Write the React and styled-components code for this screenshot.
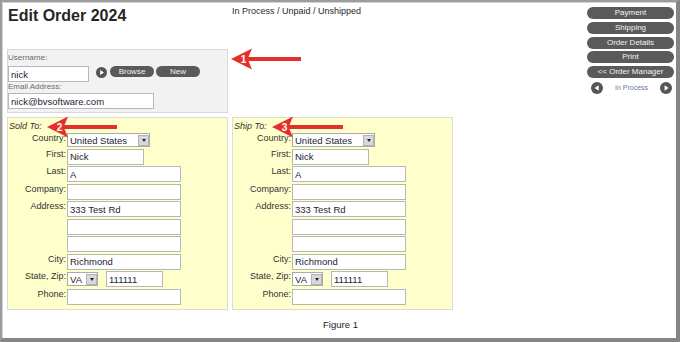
import styled, { createGlobalStyle } from "styled-components";

const GlobalStyle = createGlobalStyle`
  body {
    margin: 0;
    background: #fff;
    font-family: "Liberation Sans", Arial, sans-serif;
  }
`;

const Frame = styled.div`
  position: relative;
  width: 680px;
  height: 342px;
  box-sizing: border-box;
  border-style: solid;
  border-color: #9c9c9c #858585 #858585 #9c9c9c;
  border-width: 2px 4px 4px 2px;
  box-shadow: inset 1px 1px 0 #d4d4d4;
  background: #fff;
  padding: 4px 2px 0 5px;
  display: flex;
  flex-direction: column;
  color: #222;
`;

const Top = styled.div`
  display: flex;
  justify-content: space-between;
  align-items: flex-start;
`;

const Main = styled.div`
  display: grid;
  grid-template-columns: 221px 221px;
  grid-template-rows: 39px auto auto;
  column-gap: 4px;
  row-gap: 4px;
`;

const Title = styled.h1`
  margin: 1px 0 0 1px;
  font-size: 16px;
  line-height: 18px;
  font-weight: bold;
  color: #262626;
`;

const Status = styled.div`
  font-size: 9px;
  line-height: 11px;
  color: #2a2a2a;
`;

const UserBox = styled.div`
  grid-column: 1;
  border: 1px solid #d8d8d8;
  background: #f2f2f2;
  padding: 3px 1px 3px 0;
`;

const SmallLabel = styled.div`
  font-size: 8px;
  line-height: 10px;
  color: #6a6a6a;
  margin-bottom: ${(p) => p.$gap || 0}px;
`;

const UserRow = styled.div`
  display: flex;
  align-items: flex-start;
`;

const TextInput = styled.input`
  display: block;
  width: ${(p) => p.$w}px;
  height: 16px;
  box-sizing: border-box;
  margin: 0;
  border: 1px solid #b7b7b7;
  padding: 0 2px;
  background: #fff;
  font-family: "Liberation Sans", Arial, sans-serif;
  font-size: 9.5px;
  color: #1d1d35;
  outline: none;
`;

const PillButton = styled.button`
  display: block;
  width: ${(p) => p.$w}px;
  height: ${(p) => p.$h || 11}px;
  margin: ${(p) => p.$m || "0"};
  padding: 0;
  border: none;
  border-radius: 6px;
  background: #5a5a5a;
  color: #f2f2f2;
  font-family: "Liberation Sans", Arial, sans-serif;
  font-size: 8px;
  line-height: ${(p) => p.$h || 11}px;
  text-align: center;
`;

const RoundIcon = styled.svg`
  flex: none;
  display: block;
  margin: ${(p) => p.$m || "0"};
`;

const Panel = styled.div`
  border: 1px solid #dcdcd0;
  background: #ffffcc;
  padding: 3px 0 4px 0;
`;

const PanelTitle = styled.div`
  font-size: 9px;
  line-height: 11px;
  font-style: italic;
  color: #333;
  padding-left: 1px;
  margin-bottom: 1px;
`;

const FieldGrid = styled.div`
  display: grid;
  grid-template-columns: 58px auto;
  column-gap: 1px;
  row-gap: 1.5px;
  align-items: start;
  justify-items: start;
`;

const FieldLabel = styled.div`
  justify-self: end;
  font-size: 9px;
  line-height: 11px;
  color: #333;
`;

const Inline = styled.div`
  display: flex;
  align-items: center;
  gap: 8px;
`;

const SelectBox = styled.div`
  width: ${(p) => p.$w}px;
  height: 14px;
  box-sizing: border-box;
  border: 1px solid #ababab;
  background: #fff;
  display: flex;
  align-items: center;
  justify-content: space-between;
  font-size: 9.5px;
  color: #1d1d35;
  padding-left: 2px;
`;

const DropButton = styled.span`
  width: 11px;
  height: 11px;
  box-sizing: border-box;
  margin-right: 0;
  border: 1px solid #b3b3b3;
  background: #d8d8d8;
  display: flex;
  align-items: center;
  justify-content: center;

  &::after {
    content: "";
    border-left: 2.5px solid transparent;
    border-right: 2.5px solid transparent;
    border-top: 3px solid #222;
  }
`;

const Nav = styled.div`
  width: 87px;
  margin-top: 1px;
  display: flex;
  flex-direction: column;
  gap: 2.75px;
`;

const Pager = styled.div`
  margin-top: 1px;
  display: flex;
  align-items: center;
  justify-content: space-between;
  padding: 0 2px 0 4px;
  font-size: 7px;
  color: #6b78a0;
`;

const Caption = styled.div`
  margin-top: 9px;
  text-align: center;
  font-size: 9.5px;
  line-height: 11px;
  color: #222;
`;

const Callout = styled.svg`
  position: absolute;
  left: ${(p) => p.$x - 2}px;
  top: ${(p) => p.$y - 13}px;
  overflow: visible;
`;

function Arrow({ x, y, len, num }) {
  return (
    <Callout $x={x} $y={y} width={len} height="22" viewBox={`0 0 ${len} 22`}>
      <path
        d={`M0 11 L21 0.5 L17.5 9 L${len} 9 L${len} 13 L17.5 13 L21 21.5 Z`}
        fill="#e3302a"
      />
      <text
        x="12.5"
        y="14.5"
        textAnchor="middle"
        fontSize="10"
        fontWeight="bold"
        fill="#fff"
        fontFamily="Liberation Sans, Arial, sans-serif"
      >
        {num}
      </text>
    </Callout>
  );
}

function Circle({ dir, size = 12, m }) {
  const tri =
    dir === "left"
      ? `M${size * 0.64} ${size * 0.27} L${size * 0.3} ${size / 2} L${size * 0.64} ${size * 0.73} Z`
      : `M${size * 0.38} ${size * 0.27} L${size * 0.72} ${size / 2} L${size * 0.38} ${size * 0.73} Z`;
  return (
    <RoundIcon $m={m} width={size} height={size} viewBox={`0 0 ${size} ${size}`}>
      <circle cx={size / 2} cy={size / 2} r={size / 2} fill="#555" />
      <path d={tri} fill="#fff" />
    </RoundIcon>
  );
}

function Select({ w, value }) {
  return (
    <SelectBox $w={w}>
      <span>{value}</span>
      <DropButton />
    </SelectBox>
  );
}

function AddressPanel({ title }) {
  return (
    <Panel>
      <PanelTitle>{title}</PanelTitle>
      <FieldGrid>
        <FieldLabel>Country:</FieldLabel>
        <Select w={83} value="United States" />
        <FieldLabel>First:</FieldLabel>
        <TextInput $w={77} defaultValue="Nick" />
        <FieldLabel>Last:</FieldLabel>
        <TextInput $w={114} defaultValue="A" />
        <FieldLabel>Company:</FieldLabel>
        <TextInput $w={114} defaultValue="" />
        <FieldLabel>Address:</FieldLabel>
        <TextInput $w={114} defaultValue="333 Test Rd" />
        <FieldLabel />
        <TextInput $w={114} defaultValue="" />
        <FieldLabel />
        <TextInput $w={114} defaultValue="" />
        <FieldLabel>City:</FieldLabel>
        <TextInput $w={114} defaultValue="Richmond" />
        <FieldLabel>State, Zip:</FieldLabel>
        <Inline>
          <Select w={31} value="VA" />
          <TextInput $w={57} defaultValue="111111" />
        </Inline>
        <FieldLabel>Phone:</FieldLabel>
        <TextInput $w={114} defaultValue="" />
      </FieldGrid>
    </Panel>
  );
}

const navItems = ["Payment", "Shipping", "Order Details", "Print", "<< Order Manager"];

export default function App() {
  return (
    <>
      <GlobalStyle />
      <Frame>
        <Top>
          <Main>
            <Title>Edit Order 2024</Title>
            <Status>In Process / Unpaid / Unshipped</Status>
            <UserBox>
              <SmallLabel $gap={3}>Username:</SmallLabel>
              <UserRow>
                <TextInput $w={81} defaultValue="nick" />
                <Circle dir="right" size={11} m="1px 0 0 7px" />
                <PillButton $w={44} $m="0 0 0 3px">Browse</PillButton>
                <PillButton $w={44} $m="0 0 0 2px">New</PillButton>
              </UserRow>
              <SmallLabel $gap={1}>Email Address:</SmallLabel>
              <TextInput $w={146} defaultValue="nick@bvsoftware.com" />
            </UserBox>
            <div />
            <AddressPanel title="Sold To:" />
            <AddressPanel title="Ship To:" />
          </Main>
          <Nav>
            {navItems.map((item) => (
              <PillButton key={item} $w={87} $h={12}>
                {item}
              </PillButton>
            ))}
            <Pager>
              <Circle dir="left" />
              <span>In Process</span>
              <Circle dir="right" />
            </Pager>
          </Nav>
        </Top>
        <Caption>Figure 1</Caption>
        <Arrow x={231} y={59} len={70} num="1" />
        <Arrow x={47} y={127} len={70} num="2" />
        <Arrow x={272} y={127} len={71} num="3" />
      </Frame>
    </>
  );
}
